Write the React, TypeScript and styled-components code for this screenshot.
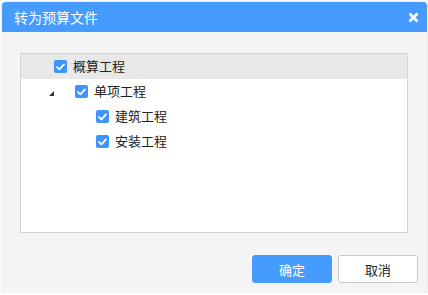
import styled, { createGlobalStyle } from "styled-components";

const GlobalStyle = createGlobalStyle`
    html, body {
        margin: 0;
        padding: 0;
        background: #ffffff;
    }
    body {
        font-family: "Noto Sans CJK SC", "Liberation Sans", sans-serif;
    }
`;

type Node = { label: string; depth: number; expander?: boolean; selected?: boolean };

const nodes: Node[] = [
    { label: "概算工程", depth: 0, selected: true },
    { label: "单项工程", depth: 1, expander: true },
    { label: "建筑工程", depth: 2 },
    { label: "安装工程", depth: 2 },
];

function Check() {
    return (
        <CheckBox>
            <svg width="9" height="8" viewBox="0 0 9 8">
                <path d="M1 4.2 L3.4 6.4 L8 1.4" stroke="#fff" strokeWidth="1.8" fill="none" strokeLinecap="round" strokeLinejoin="round" />
            </svg>
        </CheckBox>
    );
}

export default function App() {
    return (
        <>
            <GlobalStyle />
            <Dialog>
                <Header>
                    <Title>转为预算文件</Title>
                    <Close>
                        <svg width="11" height="11" viewBox="0 0 11 11">
                            <path d="M1.5 1.5 L9.5 9.5 M9.5 1.5 L1.5 9.5" stroke="#fff" strokeWidth="2.6" />
                        </svg>
                    </Close>
                </Header>
                <Body>
                    <Tree>
                        {nodes.map((n) => (
                            <Row key={n.label} $selected={n.selected}>
                                <Indent $depth={n.depth}>
                                    {n.expander && <Expander />}
                                </Indent>
                                <Check />
                                <Label>{n.label}</Label>
                            </Row>
                        ))}
                    </Tree>
                    <Footer>
                        <Button $primary>确定</Button>
                        <Button>取消</Button>
                    </Footer>
                </Body>
            </Dialog>
        </>
    );
}

const Dialog = styled.div`
    margin: 2px 0 0 2px;
    width: 425px;
    height: 291px;
    border-radius: 4px;
    overflow: hidden;
    background: #f4f4f4;
    box-shadow: 0 0 2px rgba(0, 0, 0, 0.25);
    display: flex;
    flex-direction: column;
`;

const Header = styled.div`
    height: 30px;
    background: #469bff;
    display: flex;
    align-items: center;
    justify-content: space-between;
    padding: 0 8px 0 12px;
`;

const Title = styled.span`
    color: #ffffff;
    font-size: 14px;
`;

const Close = styled.span`
    display: flex;
    align-items: center;
    margin-top: 1px;
`;

const Body = styled.div`
    flex: 1;
    display: flex;
    flex-direction: column;
    padding: 21px 19px 10px 18px;
`;

const Tree = styled.div`
    height: 178px;
    background: #ffffff;
    border: 1px solid #d4d4d4;
`;

const Row = styled.div<{ $selected?: boolean }>`
    height: 25px;
    display: flex;
    align-items: center;
    background: ${(p) => (p.$selected ? "#e8e8e8" : "transparent")};
`;

const Indent = styled.div<{ $depth: number }>`
    width: ${(p) => 33 + p.$depth * 21}px;
    height: 100%;
    display: flex;
    align-items: center;
    justify-content: flex-end;
    padding-right: 21px;
    box-sizing: border-box;
`;

const Expander = styled.span`
    width: 0;
    height: 0;
    border-left: 5px solid transparent;
    border-bottom: 5px solid #333333;
    margin-top: 3px;
`;

const CheckBox = styled.span`
    width: 13px;
    height: 13px;
    border-radius: 2px;
    background: #3e94f8;
    display: flex;
    align-items: center;
    justify-content: center;
    flex-shrink: 0;
`;

const Label = styled.span`
    margin-left: 6px;
    font-size: 13px;
    color: #222222;
    margin-top: -3px;
`;

const Footer = styled.div`
    margin-top: auto;
    display: flex;
    justify-content: flex-end;
    gap: 6px;
    margin-right: -10px;
`;

const Button = styled.button<{ $primary?: boolean }>`
    width: 80px;
    height: 28px;
    border-radius: 3px;
    font-family: "Noto Sans CJK SC", "Liberation Sans", sans-serif;
    font-size: 13px;
    cursor: pointer;
    border: 1px solid ${(p) => (p.$primary ? "#469bff" : "#c8c8c8")};
    background: ${(p) => (p.$primary ? "#469bff" : "#ffffff")};
    color: ${(p) => (p.$primary ? "#ffffff" : "#222222")};
`;
